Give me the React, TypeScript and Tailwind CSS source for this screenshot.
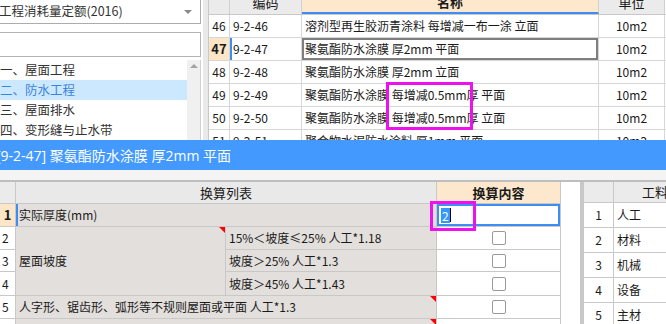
import React from 'react';

const topRows = [
  { n: 46, code: '9-2-46', name: '溶剂型再生胶沥青涂料 每增减一布一涂 立面' },
  { n: 47, code: '9-2-47', name: '聚氨酯防水涂膜 厚2mm 平面' },
  { n: 48, code: '9-2-48', name: '聚氨酯防水涂膜 厚2mm 立面' },
  { n: 49, code: '9-2-49', name: '聚氨酯防水涂膜 每增减0.5mm厚 平面' },
  { n: 50, code: '9-2-50', name: '聚氨酯防水涂膜 每增减0.5mm厚 立面' },
  { n: 51, code: '9-2-51', name: '聚合物水泥防水涂料 厚1mm 平面' },
];

const tree = [
  { idx: '一、', label: '屋面工程' },
  { idx: '二、', label: '防水工程', active: true },
  { idx: '三、', label: '屋面排水' },
  { idx: '四、', label: '变形缝与止水带' },
];

const materials = ['人工', '材料', '机械', '设备', '主材'];

const Check = () => (
  <div className="w-[14px] h-[14px] rounded-[2px] border border-[#9a9a9a] bg-white" />
);

// small red marker in a cell's top-right corner
const Flag = () => (
  <div className="absolute top-0 right-0 w-0 h-0 border-l-[6px] border-l-transparent border-t-[6px] border-t-[#ff0000]" />
);

export default function App() {
  return (
    <div className="relative w-[666px] h-[324px] overflow-hidden bg-white flex flex-col text-[12px] text-[#1a1a1a] font-['Noto_Sans_CJK_SC',sans-serif]">
      {/* top: tree + quota list */}
      <div className="h-[140px] flex shrink-0 overflow-hidden">
        <div className="w-[201px] flex flex-col shrink-0">
          <div className="h-[25px] border border-t-0 border-l-0 border-[#acacac] flex items-center justify-between pr-[8px] text-[12.5px] text-[#333]">
            <span className="-ml-[1px]">工程消耗量定额(2016)</span>
            <div className="w-0 h-0 border-l-[4px] border-r-[4px] border-t-[4px] border-l-transparent border-r-transparent border-t-[#8a8a8a]" />
          </div>
          <div className="h-[26px] mt-[8px] border border-l-0 border-[#b4b4b4]" />
          <div className="flex flex-1 mt-[3px] border-r border-[#d0d0d0]">
            <div className="flex-1 flex flex-col">
              {tree.map((t) => (
                <div
                  key={t.idx}
                  className={`h-[20px] shrink-0 flex items-center text-[12.5px] ${
                    t.active ? 'bg-[#cce8ff] text-[#3a85dc]' : 'text-[#333]'
                  }`}
                >
                  <span className="w-[25px] shrink-0">{t.idx}</span>
                  <span>{t.label}</span>
                </div>
              ))}
            </div>
            <div className="w-[13px] bg-[#f0f0f0] flex justify-center pt-[4px]">
              <div className="w-0 h-0 border-l-[4px] border-r-[4px] border-b-[4px] border-l-transparent border-r-transparent border-b-[#a3a3a3]" />
            </div>
          </div>
        </div>
        <div className="w-[7px] shrink-0 bg-[#e9e9e9] border-l-2 border-white" />
        <div className="flex-1 flex flex-col -mt-[8px] border-l border-[#c8c8c8]">
          <div className="h-[23px] shrink-0 flex border-b border-[#c8c8c8]">
            <div className="w-[21px] bg-[#ebebeb] border-r border-[#d0d0d0]" />
            <div className="w-[72px] bg-[#ebebeb] border-r border-[#d0d0d0] flex items-center justify-center text-[13px]">编码</div>
            <div className="w-[297px] bg-[#fde8cd] border-r border-[#d0d0d0] border-b-2 border-b-[#3e8df0] flex items-center justify-center text-[13px] font-bold">名称</div>
            <div className="w-[66px] bg-[#ebebeb] border-r border-[#d0d0d0] flex items-center justify-center text-[13px]">单位</div>
          </div>
          {topRows.map((r) => {
            const sel = r.n === 47;
            return (
              <div key={r.n} className="h-[23px] shrink-0 flex border-b border-[#d6d6d6]">
                <div
                  className={`w-[21px] border-r border-[#d6d6d6] flex items-center justify-center ${
                    sel ? 'bg-[#fde5c8] font-bold text-[13px]' : 'text-[12px]'
                  }`}
                >
                  {r.n}
                </div>
                <div
                  className={`w-[72px] border-r border-[#d6d6d6] flex items-center pl-[3px] ${
                    sel ? 'shadow-[inset_2px_0_0_#3e8df0]' : ''
                  }`}
                >
                  {r.code}
                </div>
                <div
                  className={`w-[297px] border-r border-[#d6d6d6] flex items-center pl-[3px] whitespace-pre ${
                    sel ? 'shadow-[inset_0_0_0_2px_#7f7f7f]' : ''
                  }`}
                >
                  {r.name}
                </div>
                <div className="w-[66px] border-r border-[#d6d6d6] flex items-center justify-center">10m2</div>
              </div>
            );
          })}
        </div>
      </div>

      {/* title bar */}
      <div className="h-[30px] shrink-0 bg-[#4399fe] flex items-center text-white text-[14px] whitespace-pre font-['Open_Sans','Noto_Sans_CJK_SC',sans-serif]">
        <span className="-ml-[4px]">[9-2-47] 聚氨酯防水涂膜 厚2mm 平面</span>
      </div>
      <div className="h-[12px] shrink-0 bg-[#f4f4f4] border-b-2 border-[#bebebe]" />

      {/* bottom: conversion table + material list */}
      <div className="flex-1 flex overflow-hidden">
        <div className="w-[561px] shrink-0 flex flex-col border-r border-[#c8c8c8]">
          <div className="h-[22px] shrink-0 flex border-b border-[#c8c8c8]">
            <div className="w-[16px] bg-[#ebebeb] border-r border-[#c8c8c8]" />
            <div className="w-[421px] bg-[#e9e9e9] border-r border-[#c8c8c8] flex items-center justify-center text-[13px]">换算列表</div>
            <div className="flex-1 bg-[#fde8cd] flex items-center justify-center text-[13px] font-bold">换算内容</div>
          </div>

          {/* row 1 */}
          <div className="h-[23px] shrink-0 flex border-b border-[#c8c8c8]">
            <div className="w-[16px] bg-[#fde5c8] border-r border-[#c8c8c8] flex items-center justify-center font-bold text-[13px]">1</div>
            <div className="w-[421px] bg-[#e2dfdc] border-r border-[#c8c8c8] shadow-[inset_2px_0_0_#3e8df0] flex items-center pl-[3px]">实际厚度(mm)</div>
            <div className="flex-1 border-2 border-[#3e8df0] flex items-center pl-[2px]">
              <span className="bg-[#3399ff] text-white px-[1px] leading-[15px]">2</span>
              <span className="w-[1px] h-[14px] bg-black" />
            </div>
          </div>

          {/* rows 2-4 */}
          <div className="h-[69px] shrink-0 flex border-b border-[#c8c8c8]">
            <div className="w-[16px] flex flex-col border-r border-[#c8c8c8]">
              {['2', '3', '4'].map((n) => (
                <div key={n} className="h-[23px] border-b border-[#c8c8c8] last:border-b-0 flex items-center pl-[2px]">{n}</div>
              ))}
            </div>
            <div className="relative w-[210px] bg-[#e2dfdc] border-r border-[#c8c8c8] flex items-center pl-[3px]">
              屋面坡度
              <Flag />
            </div>
            <div className="w-[211px] flex flex-col border-r border-[#c8c8c8]">
              {['15%＜坡度≤25% 人工*1.18', '坡度＞25% 人工*1.3', '坡度＞45% 人工*1.43'].map((s) => (
                <div key={s} className="h-[23px] bg-[#e2dfdc] border-b border-[#c8c8c8] last:border-b-0 flex items-center pl-[3px] whitespace-pre">{s}</div>
              ))}
            </div>
            <div className="flex-1 flex flex-col">
              {[0, 1, 2].map((i) => (
                <div key={i} className="h-[23px] border-b border-[#c8c8c8] last:border-b-0 flex items-center justify-center"><Check /></div>
              ))}
            </div>
          </div>

          {/* row 5 */}
          <div className="h-[23px] shrink-0 flex border-b border-[#c8c8c8]">
            <div className="w-[16px] border-r border-[#c8c8c8] flex items-center pl-[2px]">5</div>
            <div className="relative w-[421px] bg-[#e2dfdc] border-r border-[#c8c8c8] flex items-center pl-[3px] whitespace-pre">
              人字形、锯齿形、弧形等不规则屋面或平面 人工*1.3
              <Flag />
            </div>
            <div className="flex-1 flex items-center justify-center"><Check /></div>
          </div>

          {/* row 6 (cut off) */}
          <div className="h-[23px] shrink-0 flex">
            <div className="w-[16px] border-r border-[#c8c8c8]" />
            <div className="relative w-[421px] bg-[#e2dfdc] border-r border-[#c8c8c8]">
              <Flag />
            </div>
            <div className="flex-1" />
          </div>
        </div>

        <div className="w-[19px] shrink-0 bg-white" />
        <div className="w-[4px] shrink-0 bg-[#c8c8c8]" />

        <div className="flex-1 flex flex-col">
          <div className="h-[21px] shrink-0 flex border-b border-[#c8c8c8]">
            <div className="w-[30px] bg-[#ebebeb] border-r border-[#c8c8c8]" />
            <div className="flex-1 bg-[#ebebeb] flex items-center pl-[28px] text-[13px] whitespace-nowrap">工料机</div>
          </div>
          {materials.map((m, i) => (
            <div key={m} className="h-[25px] shrink-0 flex border-b border-[#c8c8c8]">
              <div className="w-[30px] border-r border-[#c8c8c8] flex items-center justify-center">{i + 1}</div>
              <div className="flex-1 flex items-center pl-[3px]">{m}</div>
            </div>
          ))}
        </div>
      </div>

      {/* magenta annotation boxes */}
      <div className="absolute left-[386px] top-[82px] w-[87px] h-[48px] border-[3px] border-[#ee11ee]" />
      <div className="absolute left-[430px] top-[201px] w-[46px] h-[30px] border-[3px] border-[#ee11ee]" />
    </div>
  );
}
